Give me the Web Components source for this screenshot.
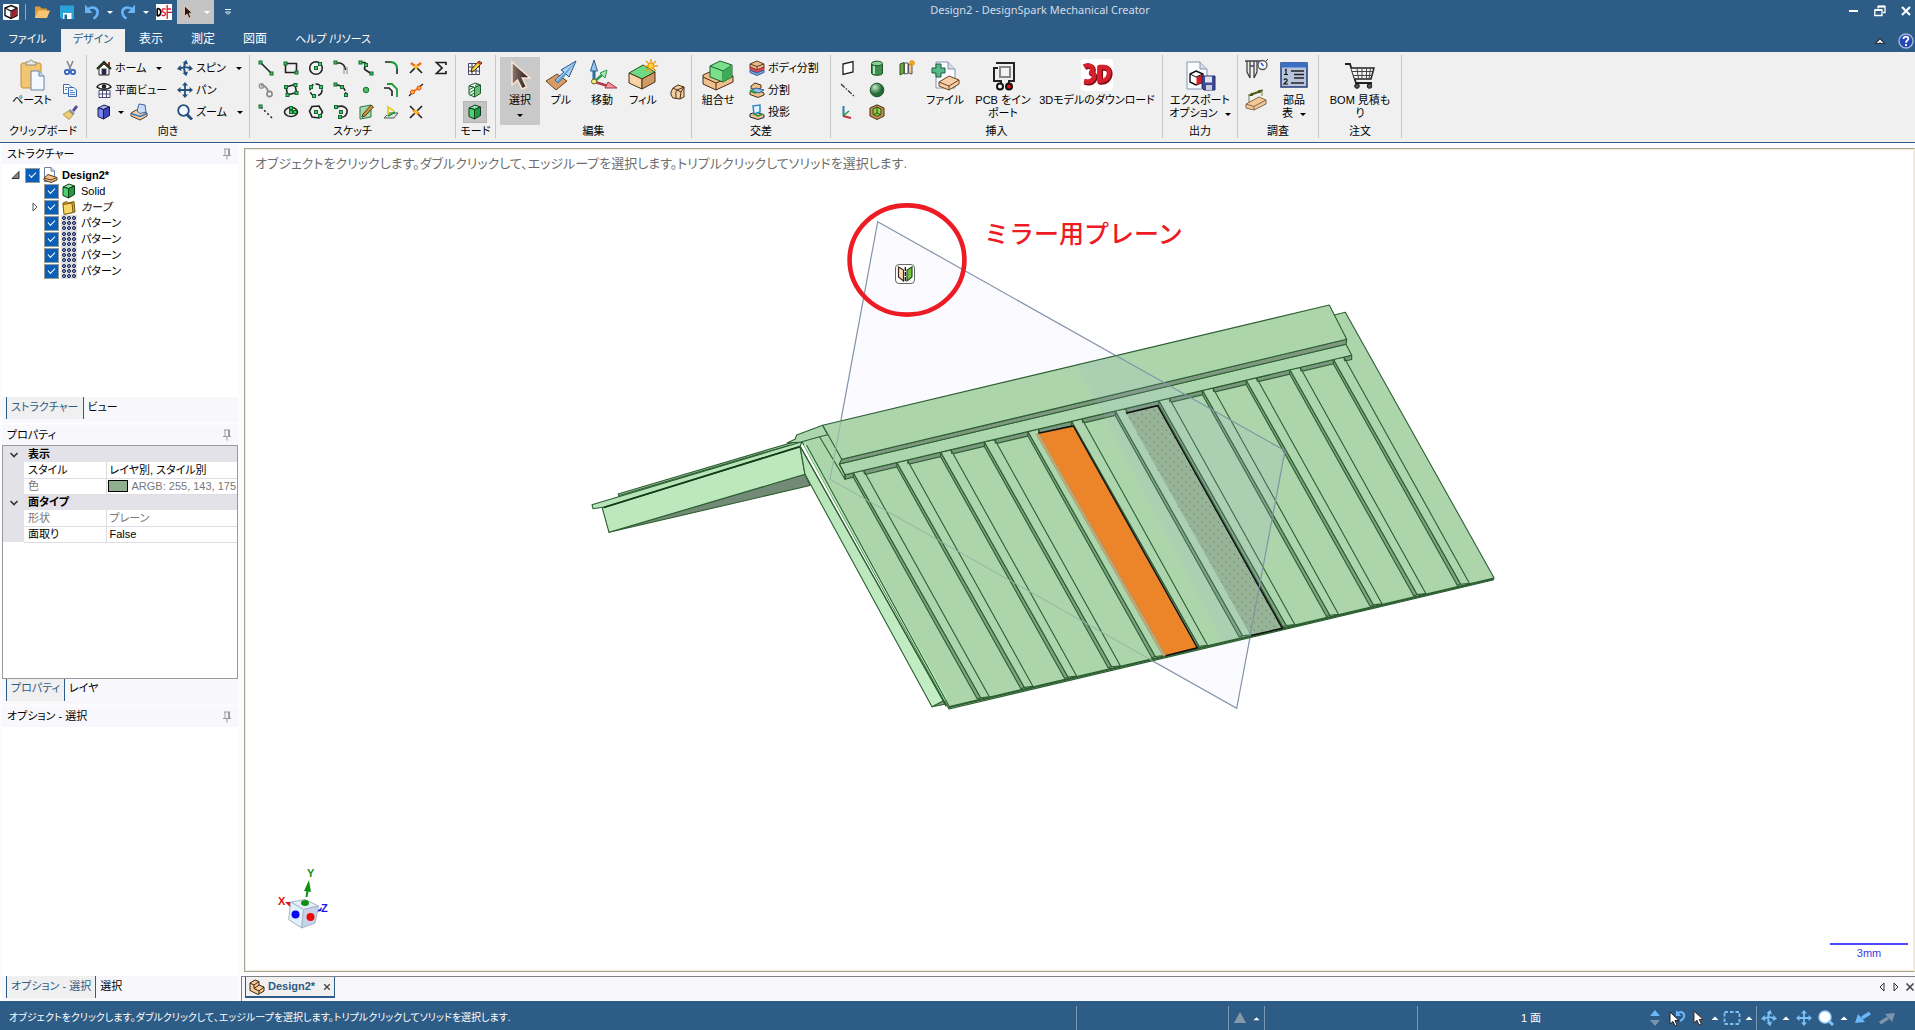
<!DOCTYPE html>
<html lang="ja">
<head>
<meta charset="utf-8">
<title>Design2 - DesignSpark Mechanical Creator</title>
<style>
html,body{margin:0;height:100%}
body{font:11px/13px "Liberation Sans","Noto Sans CJK JP",sans-serif;font-feature-settings:"palt";color:#000;overflow:hidden;
--blue:#2d5c86;--bar:#f7f7fc;--face:#f0f0f0}
</style>
</head>
<body>
<cad-app></cad-app>
<script>
const BASE = `:host,*{box-sizing:border-box}button{font:inherit;font-feature-settings:inherit;color:inherit;background:none;border:0;padding:0;margin:0}`;
function define(name, html, init){
  const t = document.createElement('template');
  t.innerHTML = html;
  customElements.define(name, class extends HTMLElement{
    connectedCallback(){
      if(this.shadowRoot) return;
      const r = this.attachShadow({mode:'open'});
      r.append(t.content.cloneNode(true));
      if(init) init(this, r);
    }
  });
}

/* ---------- icons ---------- */
const box = (f,s,t,l='#222') => `<path d="M2 4L8 1L13.500 3L7.500 5.500Z" fill="${t}" stroke="${l}"/><path d="M2 4L7.500 5.500V15L2 12.500Z" fill="${f}" stroke="${l}"/><path d="M7.500 5.500L13.500 3V11.500L7.500 15Z" fill="${s}" stroke="${l}"/>`;
const n = (x,y) => `<rect x="${x-1.5}" y="${y-1.5}" width="3" height="3" fill="#4cc06a" stroke="#0d6b2c" stroke-width="1"/>`;
const k = (d,c='#222',w=1.6,x='') => `<path d="${d}" fill="none" stroke="${c}" stroke-width="${w}" ${x}/>`;
const cur = (s='#fff',f='#2a1a14') => `<path d="M4 1L4 13L7 10.3L9 15L11.3 14L9.3 9.5L13 9.3Z" fill="${f}" stroke="${s}"/>`;
const star = (x,y,r) => `<circle cx="${x}" cy="${y}" r="${r*.45}" fill="#ffd23c" stroke="#e08a00"/>` + [0,45,90,135].map(a=>`<path transform="rotate(${a} ${x} ${y})" d="M${x} ${y-r}V${y-r*.5}M${x} ${y+r*.5}V${y+r}" stroke="#f09a10" stroke-width="1.4"/>`).join('');
const spin = c => `<path d="M9 1C6.500 5 6.500 11 9 15M2 9C6 6.500 11 6.500 14 9" fill="none" stroke="${c}" stroke-width="2"/><path d="M5.500 3L9.500 0L11 4.500ZM5.500 13L9.500 16L11 11.500ZM3.500 5L0 9L4.500 11ZM12.500 5L16 9L11.500 11Z" fill="${c}"/>`;
const pan = c => `<path d="M8 2V14M2 8H14" stroke="${c}" stroke-width="1.8"/><path d="M8 0L11 3.500H5ZM8 16L11 12.500H5ZM0 8L3.500 5V11ZM16 8L12.500 5V11Z" fill="${c}"/>`;
const I = {
app:[16,`<rect width="16" height="16" rx="1" fill="#fff"/><path d="M8 1.500L14 4V11.500L8 14.500L2 11.500V4Z" fill="#fff" stroke="#111" stroke-width="1.400"/><path d="M8.500 7L13.500 4.500V11.500L8.500 14Z" fill="#a5202c"/><path d="M2 4L8 7L14 4M8 7V14" fill="none" stroke="#111" stroke-width="1.200"/>`],
folder:[16,`<path d="M1 14V2.500H6L7.500 4.500H13V7" fill="#d89b3c"/><path d="M1 14L4 6.500H16L13 14Z" fill="#f8c474"/>`],
save:[16,`<path d="M1 1.500H15V15H3L1 13Z" fill="#29a3d9"/><rect x="4" y="9" width="8.500" height="6" fill="#fff"/><rect x="5.500" y="10.500" width="2.500" height="4.500" fill="#1a6c9a"/>`],
undo:[16,`<path d="M4 5C10 1.500 14.500 5 13.500 9.500C13 12 11.500 13.500 9.500 14.500" fill="none" stroke="#69b4f4" stroke-width="2.600"/><path d="M1 .5V9H8.500Z" fill="#69b4f4"/>`],
redo:[16,`<path d="M12 5C6 1.500 1.500 5 2.500 9.500C3 12 4.500 13.500 6.500 14.500" fill="none" stroke="#69b4f4" stroke-width="2.600"/><path d="M15 .5V9H7.500Z" fill="#69b4f4"/>`],
ds:[16,`<rect width="16" height="16" fill="#fff"/><path d="M1.200 4.500V12M1.200 4.500C6 4 6 12.300 1.200 12" fill="none" stroke="#000" stroke-width="1.700"/><path d="M9.800 5.200C5 3.500 5.500 8 7.800 8.200C10.500 8.600 9.500 13 5.800 11.200M11.200 1V15M11 8.300H16M11 5H15" fill="none" stroke="#e0182c" stroke-width="1.300"/>`],
cursor:[16,cur('#e9c9b6')],
custom:[8,`<path d="M1 1.500H7M1.500 4H6.500L4 6.500Z" fill="none" stroke="#e4ecf4" stroke-width="1"/>`],
min:[12,`<path d="M1 6H10" stroke="#fff" stroke-width="2"/>`],
restore:[12,`<path d="M4 3.500V1.500H11V7.500H9M.8 5H8V10.500H.8Z" fill="none" stroke="#fff" stroke-width="1.300"/><path d="M4 1.500H11M1 5H8" stroke="#fff" stroke-width="2"/>`],
close:[12,`<path d="M2 2L10 10M10 2L2 10" stroke="#fff" stroke-width="2.200"/>`],
up:[12,`<path d="M1.500 8.500L6 3.500L10.500 8.500Z" fill="#fff" stroke="#2a3440" stroke-width="1.200"/><path d="M4.500 8.500L6 7L7.500 8.500Z" fill="#2a3440"/>`],
help:[16,`<circle cx="8" cy="8" r="7" fill="#2348b8" stroke="#a7b6d6" stroke-width="1.400"/><path d="M5.500 6C5.500 2.800 10.500 3 10.400 5.800C10.300 7.600 8 7.600 8 9.700M8 11V13" fill="none" stroke="#fff" stroke-width="1.800"/>`],
paste:[32,`<rect x="5" y="4" width="20" height="25" rx="2" fill="#f1c571" stroke="#c58f35"/><path d="M10 6V3H13C13 .5 17 .5 17 3H20V6Z" fill="#e8e8e4" stroke="#8d8d86"/><path d="M15 12H23L28 17V31H15Z" fill="#f4f8ff" stroke="#6682ab"/><path d="M23 12V17H28" fill="#c9d8ee" stroke="#6682ab"/>`],
cut:[16,`<path d="M5 1L9 10M11 1L7 10" stroke="#7b8794" stroke-width="1.500"/><circle cx="5" cy="12" r="2.200" fill="none" stroke="#2a5dc0" stroke-width="1.700"/><circle cx="11" cy="12" r="2.200" fill="none" stroke="#2a5dc0" stroke-width="1.700"/>`],
copy:[16,`<path d="M1.500 2.500H7L9.500 5V11.500H1.500Z" fill="#fff" stroke="#3d6cb5"/><path d="M6.500 5.500H12L14.500 8V14.500H6.500Z" fill="#eaf2ff" stroke="#3d6cb5"/><path d="M8 8.500H11M8 10.500H13M8 12.500H13M3 5.500H6M3 7.500H5" stroke="#5b87cc"/>`],
brush:[16,`<path d="M10 6L14 1L16 3L12 8Z" fill="#5b4a9a"/><path d="M8 5L13 9.500L11 11L6.500 7Z" fill="#8a93a8"/><path d="M6.500 7L11 11L7 15.500L1 10.500Z" fill="#ecd078" stroke="#b8964a"/>`],
home:[16,`<path d="M12 2H14V6H12Z" fill="#b62a20"/><path d="M3 8.500L8 4L13 8.500V15H3Z" fill="#fff" stroke="#222"/><path d="M1 9L8 2L15 9" fill="none" stroke="#1c2c10" stroke-width="2"/><rect x="6" y="9" width="4" height="5.500" fill="#1c1c5a" stroke="#444"/>`],
plan:[16,`<path d="M1 5C4 .5 12 .5 15 5C12 8 4 8 1 5Z" fill="#fff" stroke="#222" stroke-width="1.400"/><circle cx="8" cy="4.500" r="2.300" fill="#222"/><path d="M3 8.500H14V15.500H3ZM3 12H14M6.500 8.500V15.500M10.500 8.500V15.500" fill="#fff" stroke="#4a4a78"/>`],
bluecube:[16,box('#7b86ea','#3b46b8','#a9b0f5','#14184a')],
viewbox:[18,`<path d="M1 10L6 7L17 10V13L10 17L1 13Z" fill="#f5cf9e" stroke="#5a3d20"/><path d="M9 1L15 2L16 9L10 10.500L7 8Z" fill="#c8dcf4" stroke="#3f66a0"/><path d="M1 10.500L10 13.500L17 10.500" stroke="#2a78c8" fill="none" stroke-width="1.500"/>`],
spin:[16,spin('#24527c')], pan:[16,pan('#24527c')],
zoom:[16,`<circle cx="6.500" cy="6.500" r="5.300" fill="#f4f9ff" stroke="#24527c" stroke-width="1.800"/><path d="M10 10.500L15 15.500" stroke="#24527c" stroke-width="3"/>`],
s1:[16,k('M3 3L13 13')+n(2.5,2.5)+n(13.5,13.5)],
s2:[16,k('M2.500 3.500H13.500V12.500H2.500Z')+n(2.5,3.5)+n(13.5,12.5)],
s3:[16,`<circle cx="8" cy="8" r="6.300" fill="none" stroke="#222" stroke-width="1.600"/>`+n(8,8)+n(12,4)],
s4:[16,k('M3 3H7C11 4 12 6 12.500 10')+k('M11 7V14M14 7V14','#888',1)+n(2.5,2.5)],
s5:[16,k('M3 2.500H7C10 5 4 8 7.500 10L13 13.500')+n(2.5,2.5)+n(8,5)+n(13.5,13.5)],
s6:[16,k('M2 2H9M14 8V14')+k('M7 2C12 2 14 5 14 9','#1d9a3c',2)],
s7:[16,k('M2 13L8 7L14 13')+k('M3 3L7 6M13 3L9 6','#f07018',2.4)+`<circle cx="8" cy="7" r="2" fill="#ffc21c"/>`],
s8:[16,k('M13 5V2.500H3.500L9 8L3.500 13.500H13V11','#222',1.7)],
t1:[16,k('M3 3C8 4 9 6 10 9','#8a8a8a',2)+`<circle cx="3.500" cy="4" r="2.200" fill="none" stroke="#999" stroke-width="1.500"/><circle cx="11.500" cy="12" r="2.600" fill="none" stroke="#888" stroke-width="1.600"/>`],
t2:[16,k('M3 5L12 2.500L13.500 10.500L4.500 13Z')+n(3,5)+n(12.500,3)+n(4.500,13)+n(13.5,11)],
t3:[16,`<circle cx="8" cy="8" r="6" fill="none" stroke="#222" stroke-width="1.600" stroke-dasharray="7 2"/>`+n(3,5)+n(13,5)+n(6,14)],
t4:[16,k('M3 3C9 3 13 7 13 13','#222',1.6,'stroke-dasharray="5 1.500"')+n(2.5,2.5)+n(9,5)+n(13,13)],
t5:[16,`<circle cx="8" cy="8" r="2.800" fill="#52b868" stroke="#167a34"/>`],
t6:[16,k('M4 2H9L14 7V15','#1d9a3c',1.8)+k('M1 6H6L9 9V14')],
t7:[16,k('M1 14L6 9M10 6L15 2','#222',1.3)+k('M4 10L11 6','#f07018',2)+`<circle cx="4.500" cy="10" r="2" fill="#ffc21c" stroke="#e8401c"/><circle cx="11" cy="6" r="2" fill="#ffc21c" stroke="#e8401c"/>`],
u1:[16,k('M3 3L14 14','#222',1.5,'stroke-dasharray="2 2.500"')+n(2.5,2.5)],
u2:[16,`<ellipse cx="8" cy="8" rx="6.500" ry="4.500" fill="none" stroke="#222" stroke-width="1.600"/>`+n(8,8)+n(12,8)+n(8,4)],
u3:[16,k('M4 2.500L11 2L14.500 8L11 14L4 13L1.500 7Z')+n(8,8)+n(12,12)],
u4:[16,k('M4 3C10 .5 15 4 14 8.500C13 13 8 14.500 6.500 12')+n(3,3)+n(8,8)+n(7,13)],
u5:[16,`<path d="M2 3L13 1V13L2 15Z" fill="#a9d8b0" stroke="#2d7a44"/><path d="M4 13L5 10L13 1L15.500 3L7 12Z" fill="#c8963c" stroke="#533a18"/>`],
u6:[16,`<path d="M1 14L6 9H15L11 14Z" fill="#dfe7df" stroke="#555"/><path d="M5 12V3L11 7" fill="none" stroke="#e8cf2c" stroke-width="2"/><path d="M5 12L12 8" stroke="#1d9a3c" stroke-width="2"/>`],
u7:[16,k('M2 14L14 2M2 2L14 14')+k('M5 6L11 10','#f07018',2.5)+`<circle cx="8" cy="8" r="2" fill="#ffc21c"/>`],
m1:[16,`<path d="M1.500 3.500H12.500V14.500H1.500ZM1.500 7H12.500M1.500 11H12.500M5 3.500V14.500M9 3.500V14.500" fill="#fff" stroke="#446"/><path d="M4 12L5 8.500L12 1L15 3L7.500 10.500Z" fill="#f5d33c" stroke="#3a2a08"/><path d="M11 2L14 4.500" stroke="#d83828" stroke-width="2"/>`],
m2:[16,box('#dff3e0','#6abf74','#fff','#1d5a2c')+`<path d="M2 8L7 5M2 11L7.500 8M3 13.500L7.500 11M8 3.500L12 2" stroke="#1d7a34"/>`],
m3:[16,box('#4fd070','#1f9a40','#8ae8a0','#123a1c')],
select:[32,`<defs><linearGradient id="g"><stop offset="0" stop-color="#8a7a72"/><stop offset="1" stop-color="#1c0c08"/></linearGradient></defs><path d="M8 3V26L13.500 21L18 30L22.500 28L18.300 19H26Z" fill="url(#g)" stroke="#fbe3d3" stroke-width="1.500"/>`],
pull:[32,`<path d="M1 22L12 15L22 22L11 31Z" fill="#d59c66" stroke="#6a4322"/><path d="M10 21L19 13L16 11L31 2L24 18L21 15L13 24Z" fill="#a9d2f2" stroke="#24598c"/><path d="M31 2L21 15L13 24L11.500 22.500Z" fill="#5f9fd6"/>`],
move:[32,`<path d="M8 22V10" stroke="#2b6aa4" stroke-width="3"/><path d="M8 1L11.500 12H4.500Z" fill="#9cc8ee" stroke="#2b5c90"/><path d="M9 22L16 16" stroke="#2c9a4c" stroke-width="2.500"/><path d="M21 11L19 19L14 14Z" fill="#aee6b8" stroke="#2c9a4c"/><path d="M9 23L22 27" stroke="#b3394a" stroke-width="2.500"/><path d="M31 29L19 29L22 23Z" fill="#f0959c" stroke="#a83242"/><circle cx="8" cy="22.500" r="2.500" fill="#f6ee7a" stroke="#6a6420"/>`],
fill:[32,`<path d="M2 14L16 6L28 13L15 20Z" fill="#6ddb86" stroke="#1d5a2c"/><path d="M2 14L15 20V30L2 24Z" fill="#f8d3a8" stroke="#4a2f14"/><path d="M15 20L28 13V23L15 30Z" fill="#cf9a66" stroke="#4a2f14"/>`+star(24,7,7)],
blend:[16,`<path d="M3 4L8 1L14 3V13L10 15L3 14L1 11V8Z" fill="#f4cda2" stroke="#4a2f14"/><path d="M3 4L7 6L14 3M7 6C5 8 6 11 6 14M7 6L11 8L14 3M11 8L10 15" fill="none" stroke="#4a2f14"/>`],
combine:[32,`<path d="M1 16L10 12L31 17V23L14 31L1 25Z" fill="#efbf8c" stroke="#4a2f14"/><path d="M14 31V24L1 18M14 24L31 17" stroke="#4a2f14" fill="none"/><path d="M8 7L18 2L30 6V18L21 23L8 18Z" fill="#7be08c" stroke="#17602c"/><path d="M8 7L21 12V23M21 12L30 6" fill="none" stroke="#17602c"/><path d="M21 12L30 6V18L21 23Z" fill="#3daa55"/>`],
splitb:[16,`<path d="M1 4L8 1L15 4V7L8 10L1 7Z" fill="#e9bb8b" stroke="#5a3d20"/><path d="M1 7L8 10L15 7V9.500L8 12.500L1 9.500Z" fill="#e8505a" stroke="#a82a34"/><path d="M1 10L8 13L15 10V12.500L8 15.500L1 12.500Z" fill="#78a9e0" stroke="#33609a"/><path d="M1 4L8 6.500L15 4M8 6.500V9.500" stroke="#5a3d20" fill="none"/>`],
split:[16,`<path d="M1 10L7 7.500L15 11V13L9 15.500L1 12.500Z" fill="#efc08c" stroke="#4a2f14"/><path d="M2 4L6 1L12 3V6L8 8L2 6.500Z" fill="#efc08c" stroke="#4a2f14"/><path d="M1 9L7 6L15 8L10 11Z" fill="#8dc0ee" stroke="#2a5c94"/><path d="M1 8.500L7 11" stroke="#1d9a3c" stroke-width="2"/>`],
project:[16,`<path d="M1 10L7 8L15 11V13.500L9 15.500L1 13Z" fill="#efc08c" stroke="#20204a"/><path d="M4 2L11 1V8L5 10Z" fill="#eaf6ff" stroke="#2a8ac8" stroke-width="1.500"/><path d="M5 10L9 12L14 10" stroke="#1d9a3c" stroke-width="1.500" fill="none"/>`],
plane:[16,`<path d="M3 4L13 1.500V12L3 14.500Z" fill="#fff" stroke="#222" stroke-width="1.300"/>`],
axis:[16,k('M1 2L15 15','#333',1.3,'stroke-dasharray="5 1.500 1.500 1.500"')],
origin:[16,k('M3.500 2V12','#2a80b0',2)+k('M3 12L11 14','#c03040',2)+k('M3 12L9 7','#1d9a3c',1.5)],
cyl:[16,`<path d="M2.500 4V13C2.500 16 13.500 16 13.500 13V4" fill="#3d8f4d" stroke="#1c5228"/><path d="M5 5V14" stroke="#b5e0bb" stroke-width="2"/><ellipse cx="8" cy="3.500" rx="5.500" ry="2.300" fill="#8ccf96" stroke="#1c5228"/>`],
sphere:[16,`<defs><radialGradient id="g" cx=".35" cy=".3"><stop offset="0" stop-color="#c4ebc8"/><stop offset="1" stop-color="#246a34"/></radialGradient></defs><circle cx="8" cy="8" r="6.800" fill="url(#g)" stroke="#1c5228"/>`],
shell:[16,`<path d="M8 .8L15 4V12L8 15.500L1 12V4Z" fill="#c98d50" stroke="#4a2f14"/><path d="M8 3L12 5V10L8 12.500L4 10V5Z" fill="#8fd04c" stroke="#28501a"/><path d="M8 3V9L4 11M8 9L12 11" stroke="#28501a" fill="none"/>`],
mirrorp:[16,`<path d="M1 4L5 2.500V13L1 15Z" fill="#6aaa3c" stroke="#2a5a1c"/><path d="M5.500 3H9V13.500L5.500 14Z" fill="#fff" stroke="#555"/><path d="M9.500 4L13 5V14L9.500 13Z" fill="#e9c79c" stroke="#555"/>`+star(13,3,3)],
mirror:[20,`<rect x=".5" y=".5" width="19" height="19" rx="3.500" fill="#fff" stroke="#666"/><path d="M3.500 3L8.500 6V17L3.500 13Z" fill="#fbd9b4" stroke="#3a2a18" stroke-width="1.200"/><path d="M17 3L12 6V17L17 13Z" fill="#78be40" stroke="#22501a" stroke-width="1.200"/><path d="M10.300 3V17.500" stroke="#000" stroke-width="1.200" stroke-dasharray="4 1"/>`],
file:[32,`<path d="M7 3H19L26 10V29H7Z" fill="#fbfcff" stroke="#8594ae"/><path d="M19 3V10H26" fill="#d4ddea" stroke="#8594ae"/><path d="M8 5H13V9H17V14H13V18H8V14H4V9H8Z" fill="#58b888" stroke="#1c5c40" transform="translate(-1 0)"/><path d="M10 23L20 17L30 21V25L20 31L10 27Z" fill="#f7cfa6" stroke="#6a4322"/><path d="M10 23L20 27L30 21M20 27V31" fill="none" stroke="#6a4322"/>`],
pcb:[32,`<path d="M9 4H27V22H22V25M14 25V22H7V9H11" fill="none" stroke="#222" stroke-width="2"/><rect x="13" y="8" width="10" height="10" fill="#f4f4f4" stroke="#888" stroke-width="2"/><circle cx="13" cy="27.500" r="3" fill="#fff" stroke="#111" stroke-width="2"/><circle cx="22" cy="27.500" r="3" fill="#e0101c" stroke="#111" stroke-width="2"/>`],
threed:[32,`<rect width="32" height="32" rx="4" fill="#fff"/><g fill="none" stroke-linejoin="round"><path d="M3 7.500C8 4.500 14 8 10 13.500C16 15 13 25 3 22M18.500 8H22C31 7 30 23 18.500 22Z" stroke="#7c0c14" stroke-width="5.500" transform="translate(.8 1)"/><path d="M3 7.500C8 4.500 14 8 10 13.500C16 15 13 25 3 22M18.500 8H22C31 7 30 23 18.500 22Z" stroke="#d8202c" stroke-width="4.500"/></g>`],
exportf:[32,`<path d="M3 3H16L23 10V30H3Z" fill="#fbfcff" stroke="#8594ae"/><path d="M16 3V10H23" fill="#d4ddea" stroke="#8594ae"/><path d="M12 12L19 15V23L12 26L6 23V15Z" fill="#fff" stroke="#111" stroke-width="1.400"/><path d="M12.500 18L19 15V23L12.500 26Z" fill="#d81c28"/><path d="M6 15L12 18L19 15" fill="none" stroke="#111"/><path d="M18 17H31V31H20L18 29Z" fill="#3f4a92" stroke="#232c6a"/><rect x="21" y="17.500" width="7" height="6" fill="#dfe4f2"/><rect x="22" y="26" width="6" height="5" fill="#c6cce2"/>`],
caliper:[24,`<path d="M1 3H17M3 3V14L6 20V8H10V20L13 14V3M6 8V3M10 8V3" fill="#eee" stroke="#444" stroke-width="1.300"/><circle cx="18.500" cy="7" r="4.500" fill="#f6f8ff" stroke="#555" stroke-width="1.300"/><path d="M17 5L19.500 8" stroke="#2848d0" stroke-width="1.300"/><path d="M22 3L24 1" stroke="#444"/>`],
measure:[24,`<path d="M2 16L15 9L22 12V16L10 22L2 20Z" fill="#f2c898" stroke="#8a6a48"/><path d="M2 16L10 18.500L22 12M10 18.500V22" fill="none" stroke="#8a6a48"/><path d="M5 14V6M18 8V1" stroke="#6a7a4a"/><path d="M6 7L17 3" stroke="#4a5a10" stroke-width="2"/><path d="M4.500 8L8 4.500L9 8ZM19 2L14 2L15.500 5.500Z" fill="#4a5a10"/>`],
bomt:[32,`<rect x="3" y="4" width="26" height="24" fill="#b8c4dc" stroke="#223a78" stroke-width="1.500"/><rect x="3" y="3.500" width="26" height="5" fill="#3a70c4"/><path d="M7 11L8 10.500V15.500M6 15.500H10M6 21C7 19 10 20 9 22L6 25H10" stroke="#111" fill="none" stroke-width="1.200"/><path d="M13 12H26M16 15.500H26M16 19H26M13 24H26" stroke="#222" stroke-width="1.500"/>`],
cart:[32,`<path d="M1 5H6L12 24H28" fill="none" stroke="#222" stroke-width="1.800"/><path d="M7 9H30L27 20H11" fill="#f4f4f4" stroke="#222" stroke-width="1.500"/><path d="M8 12.500H29M9.500 16.500H28M13 9L14.500 20M18 9V20M22.500 9V20M26.500 9L25 20" stroke="#444" fill="none"/><circle cx="13" cy="27" r="2.300" fill="#555" stroke="#111"/><circle cx="25.500" cy="27" r="2.300" fill="#555" stroke="#111"/>`],
pin:[12,`<path d="M3 1H9M4 1V7.500M8.500 1V7.500M7.500 1V7.500M2 7.500H10M6 7.500V11.500" fill="none" stroke="#9a9aa2"/>`],
doc:[16,`<path d="M2.500 .5H9L12.500 4V14.500H2.500Z" fill="#fff" stroke="#6b7fa4"/><path d="M9 .5V4H12.500" fill="#d4ddea" stroke="#6b7fa4"/><path d="M2 11L6 7.500L15 10.500V13L9 15.500L2 13Z" fill="#efc08c" stroke="#5a3d20"/><path d="M2 11L9 13L15 10.500" fill="none" stroke="#5a3d20"/>`],
yfolder:[16,`<path d="M2 4L6 2.500L7.500 4L13 2.500L14 13L4 15Z" fill="#d9a92c" stroke="#7a5a10"/><path d="M2 5.500L11 4L12 13.500L3 15.500Z" fill="#f7d766" stroke="#7a5a10"/>`],
pattern:[16,`<rect width="16" height="16" fill="#dedede"/>`+[3,8,13].map(x=>[3,8,13].map(y=>`<circle cx="${x}" cy="${y}" r="1.500" fill="#8fa6e8" stroke="#141c44"/>`).join('')).join('')],
dtab:[16,`<path d="M1 4L6 1L10 2.500V6L15 8V12L9 15.500L1 11.500Z" fill="#f5cd9e" stroke="#3a2410"/><path d="M1 4L5 6V9.500L10 12V15M5 6L10 2.500M10 12L15 8M5 9.500L10 6" fill="none" stroke="#3a2410"/>`],
exp:[10,`<path d="M8 1.500V8.500H1Z" fill="#888" stroke="#333"/>`],
col:[10,`<path d="M3 1L7 5L3 9Z" fill="#fff" stroke="#555"/>`],
chev:[10,`<path d="M1.500 3L5 6.500L8.500 3" fill="none" stroke="#333" stroke-width="1.600"/>`],
left:[10,`<path d="M7 1L3 5L7 9Z" fill="none" stroke="#333"/>`],
right:[10,`<path d="M3 1L7 5L3 9Z" fill="none" stroke="#333"/>`],
x:[10,`<path d="M1.500 1.500L8.500 8.500M8.500 1.500L1.500 8.500" stroke="#444" stroke-width="1.600"/>`],
tri:[8,`<path d="M4 2.500L7.500 6H.5Z" fill="#fff"/>`],
bigtri:[14,`<path d="M7 1L13 12H1Z" fill="#8699ab"/>`],
updn:[18,`<path d="M9 1L14 7H4Z" fill="#6bb7f7"/><path d="M9 17L14 11H4Z" fill="#7d93a8"/>`],
selundo:[18,`<path d="M2 3V15L5 12.500L7 17L9 16L7 11.500H11Z" fill="#fff" stroke="#222"/><path d="M9 5C13 1 17 4 16 8C15.500 10 14 11 12 12" fill="none" stroke="#6bb7f7" stroke-width="2"/><path d="M8 1V7H13Z" fill="#6bb7f7"/>`],
wcur:[16,cur('#3a2a24','#fff')],
marquee:[18,`<rect x="1.500" y="3" width="15" height="12" fill="none" stroke="#7cc0f8" stroke-width="1.800" stroke-dasharray="3.500 2"/>`],
spinl:[16,spin('#7cc0f8')], panl:[16,pan('#7cc0f8')],
zooml:[16,`<circle cx="7" cy="7" r="6" fill="#fff" stroke="#9cd0f8" stroke-width="1.500"/><path d="M11 11L15 15" stroke="#7cc0f8" stroke-width="3"/>`],
back:[18,`<path d="M16 4L8 9" stroke="#6bb7f7" stroke-width="3.500"/><path d="M1 14L4 5L11 13Z" fill="#6bb7f7"/>`],
fwd:[18,`<path d="M2 14L10 9" stroke="#7d93a8" stroke-width="3.500"/><path d="M17 4L14 13L7 5Z" fill="#7d93a8"/>`]
};
define('app-icon', `<style>:host{display:inline-flex;flex:none}svg{display:block}</style>`, (el,r)=>{
  const [v,s] = I[el.getAttribute('name')], z = el.getAttribute('size') || v;
  r.innerHTML += `<svg aria-hidden="true" width="${z}" height="${z}" viewBox="0 0 ${v} ${v}">${s}</svg>`;
});
define('drop-caret', `<style>:host{display:inline-block;flex:none;border:3px solid transparent;border-top:3px solid;border-bottom:0;height:0;width:0}</style>`);
function putIcon(el, r){
  const i = document.createElement('app-icon');
  i.setAttribute('name', el.getAttribute('icon'));
  r.querySelector('slot[name]').replaceWith(i);
}

/* ---------- title and tabs ---------- */
define('title-bar', `<style>${BASE}
:host{display:block;background:var(--blue);color:#fff}
.row{display:flex;align-items:center}
.top{height:29px;padding:0 3px;align-items:flex-start}
.qat{display:flex;align-items:center;height:24px}
.sep{width:1px;height:16px;background:#8fa8c0;margin:0 3px 0 6px}
.qat button{display:flex;align-items:center;justify-content:center}
.w25{width:25px}.w11{width:11px}
.qat .on{width:37px;height:24px;background:#c4c4c4;gap:9px;margin:0 10px 0 1px}
h1{flex:1;margin:0;text-align:center;font:11px/20px "Noto Sans",sans-serif;color:#d5dde6}
.win{display:flex;height:22px;align-items:center;gap:14px}
.win button{display:flex}
nav{display:flex;flex:1;height:23px}
nav button{padding:0 14px 3px;min-width:52px;font-size:12px}
nav button.kana{font-size:11px}
nav button:first-child{width:61px;padding:0 6px 3px 0}
nav .on{background:var(--face);color:var(--blue);width:64px;padding:0 0 3px}
.end{display:flex;gap:12px;align-items:center;padding-right:1px}
.end button{display:flex}
</style>
<div class="row top"><div class="qat"><app-icon name="app"></app-icon><span class="sep"></span>
<button class="w25" aria-label="開く"><app-icon name="folder"></app-icon></button><button class="w25" aria-label="保存"><app-icon name="save"></app-icon></button>
<button class="w25" aria-label="元に戻す"><app-icon name="undo"></app-icon></button><button class="w11" aria-label="履歴"><drop-caret></drop-caret></button>
<button class="w25" aria-label="やり直し"><app-icon name="redo"></app-icon></button><button class="w11" aria-label="履歴"><drop-caret></drop-caret></button>
<button class="w25" aria-label="DesignSpark"><app-icon name="ds"></app-icon></button>
<button class="on" aria-label="選択"><app-icon name="cursor" size="14"></app-icon><drop-caret></drop-caret></button>
<button aria-label="カスタマイズ"><app-icon name="custom"></app-icon></button></div>
<h1>Design2 - DesignSpark Mechanical Creator</h1>
<div class="win"><button aria-label="最小化"><app-icon name="min"></app-icon></button><button aria-label="元のサイズ"><app-icon name="restore"></app-icon></button><button aria-label="閉じる"><app-icon name="close"></app-icon></button></div></div>
<div class="row"><nav><button class="kana">ファイル</button><button class="on kana">デザイン</button><button>表示</button><button>測定</button><button>図面</button><button class="kana">ヘルプ /リソース</button></nav>
<div class="end"><button aria-label="リボンを最小化"><app-icon name="up"></app-icon></button><button aria-label="ヘルプ"><app-icon name="help"></app-icon></button></div></div>`);

/* ---------- ribbon ---------- */
define('ribbon-group', `<style>${BASE}
:host{display:flex;flex-direction:column;flex:none;margin:3px 0 4px;padding-top:2px;border-right:1px solid #c8c8c8}
.body{display:flex;height:68px;padding-left:var(--pad,0)}
.name{text-align:center;line-height:12px}
</style><div class="body"><slot></slot></div><div class="name"></div>`, (el,r)=>{r.querySelector('.name').textContent = el.getAttribute('label');});
define('big-tool', `<style>${BASE}
:host{display:block;flex:none}
button{width:100%;height:68px;display:flex;flex-direction:column;align-items:center;padding-top:2px;line-height:13px}
:host([on]) button{background:#c9c9c9}
span{margin-top:3px;text-align:center;white-space:nowrap}
drop-caret{margin-top:7px}
</style><button><slot name="icon"></slot><span><slot></slot></span></button>`, (el,r)=>{
  putIcon(el, r);
  if(el.hasAttribute('caret')) r.querySelector('button').insertAdjacentHTML('beforeend','<drop-caret></drop-caret>');
});
define('small-tool', `<style>${BASE}
:host{display:flex;height:22px}
button{display:flex;align-items:center;padding:0 2px;white-space:nowrap}
:host([only]){justify-content:center}
:host([on]) button{background:#c4c4c4;outline:1px solid #b4b4b4;outline-offset:-1px;padding:0 4px}
span{margin-left:3px}:host([only]) span{display:none}
drop-caret{margin-left:10px}
</style><button><slot name="icon"></slot><span><slot></slot></span></button>`, (el,r)=>{
  putIcon(el, r);
  if(el.hasAttribute('only')) r.querySelector('button').setAttribute('aria-label', el.getAttribute('icon'));
  if(el.hasAttribute('caret')) r.querySelector('button').insertAdjacentHTML('beforeend','<drop-caret></drop-caret>');
});
const only = l => l.split(' ').map(x=>`<small-tool only icon="${x}"></small-tool>`).join('');
define('ribbon-bar', `<style>${BASE}
:host{display:flex;background:var(--face);border-bottom:1px solid var(--blue);height:91px}
.c{display:flex;flex-direction:column;flex:none}
.grid{display:grid;grid-template-rows:repeat(3,22px);align-content:start}
.row{display:flex}
.w20{width:20px}.w28{width:28px;padding-top:24px}.w36{width:36px}.w40{width:40px}.w42{width:42px}.w44{width:44px}.w56{width:56px}.w72{width:72px}.w81{width:81px}.w116{width:116px}
.gap{margin-left:7px}
.tall{padding:1px 0 0 6px;gap:6px}
drop-caret{margin-left:4px;vertical-align:middle}
.low{align-self:center;margin:0 4px}
</style>
<ribbon-group label="クリップボード" style="width:87px;--pad:4px"><big-tool class="w56" icon="paste">ペースト</big-tool><div class="c w20">${only('cut copy brush')}</div></ribbon-group>
<ribbon-group label="向き" style="width:163px;--pad:7px"><div class="c w81"><small-tool icon="home" caret>ホーム</small-tool><small-tool icon="plan">平面ビュー</small-tool><div class="row"><small-tool only icon="bluecube"></small-tool><drop-caret class="low"></drop-caret><small-tool only icon="viewbox"></small-tool></div></div><div class="c"><small-tool icon="spin" caret>スピン</small-tool><small-tool icon="pan">パン</small-tool><small-tool icon="zoom" caret>ズーム</small-tool></div></ribbon-group>
<ribbon-group label="スケッチ" style="width:206px;--pad:3px"><div class="grid" style="grid-template-columns:repeat(8,25px)">${only('s1 s2 s3 s4 s5 s6 s7 s8 t1 t2 t3 t4 t5 t6 t7')}<span></span>${only('u1 u2 u3 u4 u5 u6 u7')}</div></ribbon-group>
<ribbon-group label="モード" style="width:40px;--pad:7px"><div class="c">${only('m1 m2')}<small-tool only on icon="m3"></small-tool></div></ribbon-group>
<ribbon-group label="編集" style="width:196px;--pad:4px"><big-tool on caret class="w40" icon="select">選択</big-tool><big-tool class="w42" icon="pull">プル</big-tool><big-tool class="w40" icon="move">移動</big-tool><big-tool class="w42" icon="fill">フィル</big-tool><div class="c w28">${only('blend')}</div></ribbon-group>
<ribbon-group label="交差" style="width:139px;--pad:4px"><big-tool class="w44" icon="combine">組合せ</big-tool><div class="c gap"><small-tool icon="splitb">ボディ分割</small-tool><small-tool icon="split">分割</small-tool><small-tool icon="project">投影</small-tool></div></ribbon-group>
<ribbon-group label="挿入" style="width:332px;--pad:1px"><div class="grid" style="grid-template-columns:31px 28px 32px">${only('plane cyl mirrorp axis sphere')}<span></span>${only('origin shell')}</div><big-tool class="w44" icon="file">ファイル</big-tool><big-tool class="w72" icon="pcb">PCB をイン<br>ポート</big-tool><big-tool class="w116" icon="threed">3Dモデルのダウンロード</big-tool></ribbon-group>
<ribbon-group label="出力" style="width:75px;--pad:1px"><big-tool class="w72" icon="exportf">エクスポート<br>オプション <drop-caret></drop-caret></big-tool></ribbon-group>
<ribbon-group label="調査" style="width:81px"><div class="c w36 tall"><app-icon name="caliper"></app-icon><app-icon name="measure"></app-icon></div><big-tool class="w40" icon="bomt">部品<br>表 <drop-caret></drop-caret></big-tool></ribbon-group>
<ribbon-group label="注文" style="width:83px;--pad:5px"><big-tool class="w72" icon="cart">BOM 見積も<br>り</big-tool></ribbon-group>`);

/* ---------- side panels ---------- */
define('dock-panel', `<style>${BASE}
:host{display:flex;flex-direction:column;min-height:0}
header{display:flex;justify-content:space-between;align-items:center;height:20px;flex:none;background:var(--bar);padding:0 5px}
header button{display:flex}
.body{flex:1;min-height:0;background:#fff;display:flex;flex-direction:column}
.tabs{display:flex;height:25px;flex:none;background:var(--bar);padding-left:4px;align-items:flex-start}
.tabs button{height:22px;padding:0 4px 2px}
.tabs .on{background:var(--face);color:var(--blue);border:1px solid var(--blue);border-width:0 1px}
</style><header><span></span><button aria-label="固定"><app-icon name="pin"></app-icon></button></header><div class="body"><slot></slot></div><div class="tabs"></div>`, (el,r)=>{
  r.querySelector('header span').textContent = el.getAttribute('label');
  r.querySelector('.tabs').innerHTML = el.getAttribute('tabs').split('|').map((t,i)=>`<button class="${i?'':'on'}">${t}</button>`).join('');
});
define('tree-item', `<style>${BASE}
:host{display:flex;align-items:center;height:16px;padding-left:calc(9px + var(--lv,0)*19px);gap:2px}
.tw{width:10px;display:flex}
input{appearance:none;width:13px;height:13px;margin:0 1px 0 3px;background:#0a5fb8;outline:1px solid #9a9a9a;display:grid;place-content:center}
input::before{content:"";width:6px;height:3px;border:solid #fff;border-width:0 0 1px 1px;rotate:-45deg;margin-top:-2px}
label{display:flex;align-items:center;gap:4px}
</style><span class="tw"></span><input type="checkbox" id="c" checked><label for="c"><slot name="i"></slot><span><slot></slot></span></label>`, (el,r)=>{
  putIcon(el, r);
  if(el.getAttribute('tw')) r.querySelector('.tw').innerHTML = `<app-icon name="${el.getAttribute('tw')}"></app-icon>`;
});
define('property-grid', `<style>${BASE}
:host{display:block;flex:1;border:1px solid #999;overflow:hidden}
table{border-collapse:collapse;table-layout:fixed;width:100%;line-height:15px}
td,th{padding:0;height:16px;text-align:left;white-space:nowrap;font-weight:400}
.g{background:#e3e2e8;text-align:center}.g app-icon{vertical-align:middle}
th[colspan]{background:#e3e2e8;font-weight:700;padding-left:4px}
.n,.v{border-bottom:1px solid #dedee2;padding-left:4px}
.v{border-left:1px solid #dedee2;padding-left:3px}
.dim{color:#777}
i{display:inline-block;width:20px;height:12px;border:1px solid #000;background:#8faf8f;vertical-align:middle;margin:-2px 4px 0 -2px}
</style><table><colgroup><col style="width:21px"><col style="width:82px"><col></colgroup>
<tr><td class="g"><app-icon name="chev"></app-icon></td><th colspan="2">表示</th></tr>
<tr><td class="g"></td><th class="n">スタイル</th><td class="v">レイヤ別, スタイル別</td></tr>
<tr class="dim"><td class="g"></td><th class="n">色</th><td class="v"><i></i>ARGB: 255, 143, 175</td></tr>
<tr><td class="g"><app-icon name="chev"></app-icon></td><th colspan="2">面タイプ</th></tr>
<tr class="dim"><td class="g"></td><th class="n">形状</th><td class="v">プレーン</td></tr>
<tr><td class="g"></td><th class="n">面取り</th><td class="v">False</td></tr></table>`);
define('side-bar', `<style>${BASE}
:host{display:flex;flex-direction:column;gap:3px;width:244px;flex:none;padding:1px 6px 0 2px;background:#fcfcfe}
.tree{padding-top:3px}.first{font-weight:700}
.cv{font-style:italic}
</style>
<dock-panel label="ストラクチャー" tabs="ストラクチャー|ビュー" style="flex:278 1 0"><div class="tree">
<tree-item class="first" icon="doc" tw="exp">Design2*</tree-item>
<tree-item style="--lv:1" icon="m3">Solid</tree-item><tree-item class="cv" style="--lv:1" icon="yfolder" tw="col">カーブ</tree-item>
<tree-item style="--lv:1" icon="pattern">パターン</tree-item><tree-item style="--lv:1" icon="pattern">パターン</tree-item><tree-item style="--lv:1" icon="pattern">パターン</tree-item><tree-item style="--lv:1" icon="pattern">パターン</tree-item></div></dock-panel>
<dock-panel label="プロパティ" tabs="プロパティ|レイヤ" style="flex:278 1 0"><property-grid></property-grid></dock-panel>
<dock-panel label="オプション - 選択" tabs="オプション - 選択|選択" style="flex:294 1 0"></dock-panel>`);

/* ---------- model ---------- */
function ribs(){
  let s='';
  for(let i=0;i<12;i++){
    const p=(x,y)=>`${(x+43.65*i).toFixed(1)} ${(y-10.31*i).toFixed(1)}`;
    s+=`<path d="M${p(853.3,472.7)}L${p(853.3,477.3)}L${p(977.3,699)}L${p(980.7,697.7)}Z" fill="#7ea383"/><path d="M${p(853.3,472.7)}L${p(863.7,470.5)}L${p(989.3,696.7)}L${p(980.7,697.7)}Z" fill="#aed6ae"/><path d="M${p(863.7,470.5)}L${p(864.5,474.5)}"/>`;
  }
  return s;
}
define('model-scene', `<style>:host{display:block}svg{display:block;width:100%;height:100%}
text{font:500 25px "Noto Sans CJK JP",sans-serif;font-feature-settings:normal;fill:#ed1c24}</style>
<svg viewBox="245 149 1669 822" role="img" aria-label="屋根モデル">
<defs><pattern id="dots" width="8" height="8" patternUnits="userSpaceOnUse"><rect x="1" y="1" width="1" height="1" fill="#c98a58"/><rect x="2" y="2" width="1" height="1" fill="#5f8060"/><rect x="5" y="5" width="1" height="1" fill="#c98a58"/><rect x="6" y="6" width="1" height="1" fill="#5f8060"/></pattern>
<linearGradient id="lt" x1="0" x2="1"><stop offset="0" stop-color="#b8e4b9"/><stop offset="1" stop-color="#c4efc6"/></linearGradient></defs>
<path d="M877.700 221.700L1285 450.700L1236.700 708.300L830 479.300Z" fill="#fafaff" stroke="#8494a8" stroke-width="1.200"/>
<g stroke="#2c5e31" stroke-width="1.100" stroke-linejoin="round">
<path d="M618 494L787 444L800 441L800 447L620 498Z" fill="#a5d0a6"/>
<path d="M619 495.500L790 445" fill="none"/>
<path d="M609 532.300L805 474.300L810 485.500Z" fill="#738b76"/>
<path d="M602.300 508L609 532.300L805 474.300L800 447Z" fill="#bde8be"/>
<path d="M592 504.700L593 508.700L604 507L800 446.500L802 441.700Z" fill="#b7e4b8"/>
<path d="M604 507.500L800 446.500" stroke="#123c18" stroke-width="1.600"/>
<path d="M932 706.700L943 700L946 704Z" fill="#7c9a7e"/>
<path d="M800 446L805 474.300L932 706.700L943 701L946 706Z" fill="url(#lt)"/>
<path d="M787 443L795 439.300L796.700 435L822.700 425.300L850 478L803 442Z" fill="#acd7ae"/>
<path d="M1330 316L1345.300 312.300L1494 577.700L1493 580L949 709L947.500 706.500L802 441.700L819.500 436.700Z" fill="#acd5ac"/>
<path d="M948.500 707.300L1494 578.500" fill="none" stroke-width="2"/>
<path d="M805 444.500L946 700" fill="none" stroke="#b9ecbb" stroke-width="3"/><path d="M800 446L946.500 706M806.500 445L949 706" fill="none"/>
<path d="M845 474.700L1351.700 355.300V359.500L845 479.300Z" fill="#7c977f"/>
<g>${ribs()}</g>
<path d="M1038.300 433.300L1073.300 426L1197.300 647.700L1165.700 655.700Z" fill="#ec852a" stroke="none"/>
<path d="M1036 434L1163 656L1166 655.500L1039 434Z" fill="#c0a878" stroke="#a88950" stroke-width=".5"/>
<path d="M1038.300 433.300L1073.300 426L1197.300 647.700L1165.700 655.700" fill="none" stroke="#111" stroke-width="1.400"/>
<path d="M839.300 464L1346 344.300L1351.700 355.300L845 474.700Z" fill="#acd7ae"/>
<path d="M839.300 464L845 474.700V479.300L819.500 436.700" fill="none"/>
<path d="M841.700 459.300L1346.700 339.300L1346 344.300L839.300 464Z" fill="#7f9981"/>
<path d="M822.700 425.300L1329.300 305L1346.700 339.300L841.700 459.300Z" fill="#acd5ac"/>
</g>
<path d="M1077 365L1116.700 355.500L1285 450.700L1250 636L1223 641Z" fill="#a0b4d8" fill-opacity=".14"/>
<path d="M1126 413.300L1157.700 405.700L1282.300 628.300L1250.700 635Z" fill="#97b498"/>
<path d="M1126 413.300L1157.700 405.700L1282.300 628.300L1250.700 635Z" fill="url(#dots)"/>
<path d="M1126 413.300L1157.700 405.700L1282.300 628.300L1250.700 635.500" fill="none" stroke="#111" stroke-width="1.500"/>
<path d="M841 421L830 479.300L1153 661" fill="none" stroke="#94b2a4" stroke-width="1"/>
<path d="M1116.700 356L1285 450.700L1250 636" fill="none" stroke="#7f95a4" stroke-width="1.200"/>
<ellipse cx="907" cy="260" rx="57.400" ry="54.600" fill="none" stroke="#ed1c24" stroke-width="4.600"/>
<g transform="translate(895 264)">${I.mirror[1]}</g>
<text x="984" y="243">ミラー用プレーン</text>
</svg>`);
define('axis-triad', `<style>:host{display:block}svg{display:block}text{font:700 11px "Liberation Sans",sans-serif}</style>
<svg width="60" height="64" viewBox="274 867 60 64">
<path d="M285 903L293 903L291 909Z" fill="#e81010"/><path d="M316 913L322 908L321 912Z" fill="#1818e8"/>
<path d="M290.700 903L305 900.500L318.500 907L303.500 910.500Z" fill="#e6edf9" stroke="#a9b4cc"/><path d="M290.700 903L303.500 910.500L301.700 929L288.700 920.700Z" fill="#e0f1fb" stroke="#a9b4cc"/><path d="M303.500 910.500L318.500 907L315 924L301.700 929Z" fill="#c8d2ea" stroke="#a9b4cc"/>
<ellipse cx="305" cy="904" rx="4" ry="3" fill="#109010"/><circle cx="295.500" cy="915.500" r="4" fill="#0808f0"/><circle cx="310.500" cy="918" r="4" fill="#f00808"/>
<path d="M306.500 898L307.500 892" stroke="#109010" stroke-width="2"/><path d="M309 881L311 893L304 892Z" fill="#109010"/>
<text x="307" y="878" fill="#109010">Y</text><text x="278" y="906" fill="#e81010">X</text><text x="321" y="913" fill="#1818e8">Z</text></svg>`);
define('view-port', `<style>${BASE}
:host{position:relative;display:flex;flex-direction:column;justify-content:space-between;flex:1;min-height:0;background:#fff;border:1px solid #a8a594;border-right-color:#efe9d8;box-shadow:inset 0 0 0 1px #efe9d8}
model-scene{position:absolute;inset:0}
p{margin:0;padding:6px 10px;font-size:13px;line-height:18px;color:#6e6e6e}
.foot{display:flex;justify-content:space-between;align-items:flex-end;padding:0 6px 10px 29px}
axis-triad{padding-bottom:31px}
.scale{width:78px;border-top:2px solid #4c4cff;text-align:center;color:#3c3ce0;line-height:16px}
</style><model-scene></model-scene><p>オブジェクトをクリックします。ダブルクリックして、エッジループを選択します。トリプルクリックしてソリッドを選択します.</p>
<div class="foot"><axis-triad></axis-triad><div class="scale">3mm</div></div>`);
define('document-area', `<style>${BASE}
:host{display:flex;flex-direction:column;flex:1;min-width:0;padding-top:5px;background:#fcfcfe}
.strip{display:flex;justify-content:space-between;height:25px;margin:4px 0 0 -3px;border:1px solid #808088;border-width:1px 0 0 1px;background:var(--bar);padding-left:3px}
.tab{display:flex;align-items:center;gap:3px;height:21px;width:90px;padding:0 3px;background:var(--face);border:solid var(--blue);border-width:0 1px 2px;color:var(--blue);font-weight:700}
.tab button,.nav button{display:flex}
.nav{display:flex;gap:4px;height:20px;align-items:center}
.tab span{flex:1}
</style><view-port></view-port><div class="strip"><div class="tab"><app-icon name="dtab"></app-icon><span>Design2*</span><button aria-label="閉じる"><app-icon name="x" size="8"></app-icon></button></div>
<div class="nav"><button aria-label="前"><app-icon name="left"></app-icon></button><button aria-label="次"><app-icon name="right"></app-icon></button><button aria-label="閉じる"><app-icon name="x"></app-icon></button></div></div>`);

define('status-bar', `<style>${BASE}
:host{display:flex;align-items:stretch;flex:none;height:29px;background:var(--blue);color:#fff;padding-top:5px}
.m{flex:1;padding-left:9px;line-height:23px;font-size:10px}
.c{border-left:1px solid #7d98b2;display:flex;align-items:center;justify-content:center;gap:6px}
.tools{display:flex;align-items:center;height:24px;padding-right:16px}
.tools button{display:flex;justify-content:center}
.a{width:20px}.n{width:22px}.b{width:24px}.t{width:14px}.s{width:1px;height:24px;background:#7d98b2;margin:0 2px 0 0}
</style><div class="m">オブジェクトをクリックします。ダブルクリックして、エッジループを選択します。トリプルクリックしてソリッドを選択します.</div>
<div class="c" style="width:152px"></div><div class="c" style="width:36px"><app-icon name="bigtri"></app-icon><app-icon name="tri" size="7"></app-icon></div><div class="c" style="width:153px"></div><div class="c" style="width:227px">1 面</div>
<div class="tools"><button class="n" aria-label="上下"><app-icon name="updn"></app-icon></button><button class="n" aria-label="選択を戻す"><app-icon name="selundo"></app-icon></button><button class="a" aria-label="選択"><app-icon name="wcur"></app-icon></button><button class="t" aria-label="選択メニュー"><app-icon name="tri"></app-icon></button>
<button class="a" aria-label="ボックス選択"><app-icon name="marquee"></app-icon></button><button class="t" aria-label="選択モード"><app-icon name="tri"></app-icon></button><span class="s"></span>
<button class="a" aria-label="スピン"><app-icon name="spinl"></app-icon></button><button class="t" aria-label="スピンメニュー"><app-icon name="tri"></app-icon></button><button class="n" aria-label="パン"><app-icon name="panl"></app-icon></button><button class="n" aria-label="ズーム"><app-icon name="zooml"></app-icon></button><button class="t" aria-label="ズームメニュー"><app-icon name="tri"></app-icon></button>
<button class="b" aria-label="前のビュー"><app-icon name="back"></app-icon></button><button class="b" aria-label="次のビュー"><app-icon name="fwd"></app-icon></button></div>`);

define('cad-app', `<style>:host{display:flex;flex-direction:column;height:100vh;background:#fcfcfe}
main{display:flex;flex:1;min-height:0}</style>
<title-bar></title-bar><ribbon-bar></ribbon-bar><main><side-bar></side-bar><document-area></document-area></main><status-bar></status-bar>`);
</script>
</body>
</html>
